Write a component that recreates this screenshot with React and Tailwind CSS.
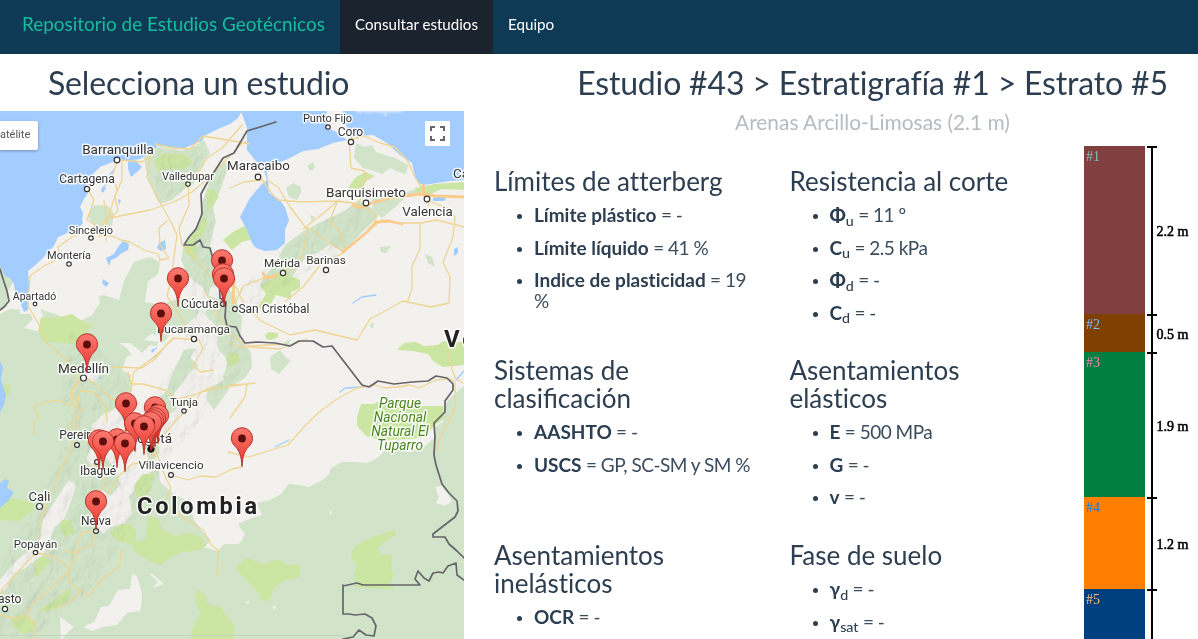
import React from "react";

const WATER = [
  "M0 111H242L238 118 230 124 218 129 204 136 202 141 197 143 182 149 170 147 157 146 147 155 140 159 133 160 117 160 110 163 100 167 92 175 88 178 86 186 88 193 84 199 80 207 83 213 82 220 83 223 77 230 67 233 61 236 58 237 54 246 50 250 43 258 32 268 28 271 29 285 29 298 28 310 24 312 20 302 15 292 14 284 10 278 5 276 0 266Z",
  "M241 111L247 128 247 150 255 160 263 167 267 180 261 185 250 198 240 217 247 230 252 243 256 248 265 251 277 250 285 243 285 230 289 220 285 207 279 199 269 193 268 180 266 167 273 165 290 158 303 151 318 149 333 143 347 140 338 133 330 129 325 121 327 111Z",
  "M343 111L344 122 349 130 351 138 357 136 373 135 387 143 400 155 412 163 415 177 419 183 423 185 437 183 450 181 464 180V111Z",
  "M128 161L135 160 142 167 137 172 131 177 128 169Z",
  "M433 198L440 195 446 199 444 201H433Z",
  "M454 249L458 247 458 253 454 256Z",
  "M0 361L3 368 1 380 6 395 4 405 0 412Z",
  "M0 483L5 479 9 481 7 488 14 492 9 500 0 508Z",
  "M103 186L106 188 103 193 101 191ZM123 241L129 244 128 250 122 253 116 258 111 260 109 266 106 258 114 254 118 247ZM159 243L165 240 166 249 161 251 157 248ZM103 279L109 283 106 287 102 283ZM118 199L121 200 119 205ZM151 350L158 347 152 353ZM99 376L102 378 99 380Z",
];

const FOREST = [
  "M147 147L160 147 182 151 195 146 204 140 210 153 205 160 198 172 194 183 182 191 172 200 160 204 156 198 150 183 146 170 144 158Z",
  "M230 160L220 166 211 174 208 187 202 203 200 218 194 230 184 244 181 260 188 276 202 287 207 295 221 300 226 278 211 263 210 240 216 222 213 207 222 186Z",
  "M88 215L94 205 108 206 114 214 112 225 104 233 96 230 91 221Z",
  "M134 262L150 257 160 262 158 274 148 281 145 302 160 305 174 300 190 300 200 312 190 322 183 330 170 334 161 347 150 345 142 353 127 356 122 370 133 376 141 388 124 394 120 402 132 418 112 426 104 440 106 458 117 470 120 485 111 496 100 489 91 500 91 521 104 534 110 527 123 525 132 513 129 497 138 487 147 474 159 468 160 482 174 494 188 501 194 520 203 533 211 540 202 550 214 562 215 577 206 572 200 557 186 553 170 566 156 568 147 571 158 582 149 592 142 606 145 611 141 613 142 593 137 576 132 574 130 589 118 590 109 606 101 607 94 622 87 625 80 631 60 617 61 639 H0V314L10 309 28 310 33 319 24 328 40 332 44 318 40 309 58 315 66 321 81 321 92 315 100 303 99 296 104 295 119 300 124 281Z",
  "M140 569L147 561 160 554 180 548 200 546 218 551 224 544 239 544 245 535 238 524 252 518 262 515 257 503 270 500 281 494 289 484 300 485 309 487 321 481 329 475 331 468 342 462 355 462 367 463 379 457 385 450 398 450 409 452 424 447 434 438 435 427 443 422 445 405 451 397 464 386V639H62L70 630 78 624 92 631 102 627 117 625 127 613 140 611 147 590 164 584 151 573 138 576Z",
  "M285 245L305 230 325 220 343 212 358 201 371 207 378 214 371 224 362 232 349 246 344 252 330 244 318 253 307 256 299 266 291 278 284 290 273 292 260 285 265 276 275 264Z",
  "M356 143L365 147 372 145 376 152 385 155 395 158 408 165 406 174 396 171 390 168 382 174 371 170 363 168 354 158ZM371 191L388 197 396 194 407 192 421 187 420 193 406 197 394 208 382 218 373 210ZM286 188L293 183 301 187 301 193 297 200 289 197ZM307 166L313 162 315 168 310 171ZM310 215L315 217 312 222ZM380 247L391 246 386 253 381 252ZM425 254L432 257 435 267 428 263ZM270 357L280 350 286 358 291 360 286 366 279 374 271 369ZM282 344L290 339 289 348ZM369 325L374 322 373 329Z",
  "M0 261L8 269 13 283 8 291 7 307 0 309Z",
  "M210 288L223 282 235 296 242 319 240 339 251 352 252 367 245 378 231 386 223 398 214 410 206 399 210 383 224 375 228 361 217 347 218 328 205 315Z",
  "M184 350L197 348 202 364 189 373 180 386 172 397 178 408 161 421 157 440 160 452 150 465 145 448 142 426 153 404 167 390 173 372Z",
];

const PARKS = [
  "M154 160L163 153 172 154 180 153 189 157 193 163 184 169 176 169 163 169 158 171Z",
  "M206 189L216 190 219 197 210 209 204 213 201 211 208 223 204 233 196 241 196 261 184 252 190 235 200 224 207 209Z",
  "M223 240L233 232 248 224 256 230 257 238 242 242 232 250Z",
  "M348 188L355 178 365 172 375 176 366 181 363 188 354 190Z",
  "M41 317L55 318 72 314 85 323 94 324 81 337 73 344 50 342 43 342 38 331Z",
  "M260 286L275 278 284 267 289 275 300 280 300 288 291 292 291 299 276 295 270 305 256 310 266 294Z",
  "M265 335L269 332 278 333 278 337 271 340 266 339Z",
  "M397 350L404 343 416 342 424 346 438 345 443 341 456 342 464 342V365L443 367 434 362 428 354 413 351Z",
  "M361 404L374 404 377 402 392 405 406 404 421 406 443 406 445 418 434 426 424 437 411 439 381 440 366 436 357 426 357 417Z",
  "M132 550L137 541 145 540 146 532 149 516 158 518 162 529 175 536 190 533 202 537 206 546 200 550 183 552 169 558 162 565 151 562 145 558Z",
  "M236 567L247 558 264 564 278 559 286 564 301 565 299 577 286 580 275 587 269 601 262 600 255 589 241 575Z",
  "M351 553L357 545 373 537 386 532 395 530 396 535 383 543 377 549 381 554 392 555 391 569 394 574 390 584 394 590 355 587 354 574 357 566 351 557Z",
  "M195 594L199 590 205 594 208 604 222 607 226 616 234 624 234 639H190L194 624 201 613 196 605Z",
  "M0 498L17 499 33 502 34 510 19 521 0 520Z",
  "M110 532L121 524 131 524 136 532 136 547 124 542 117 541Z",
  "M36 560L43 556 51 560 45 567 38 577 35 573ZM38 610L50 603 64 592 73 588 68 600 57 608 46 612ZM12 618L22 614 34 620 35 630 23 634 12 626ZM0 386L10 383 9 394 1 400Z",
  "M134 485L143 474 155 474 151 490 140 501 136 496Z",
  "M229 352L239 354 240 362 230 367 226 360ZM62 520L71 520 75 533 65 537 60 528ZM415 188L435 184 464 182V190L441 189 429 195 416 191Z",
];

const CLEARINGS = [
  "M119 343L130 343 145 355 157 349 158 342 144 340 151 334 160 335 164 343 174 341 174 349 167 364 153 367 143 362 132 356 127 348Z",
  "M130 378L137 367 150 369 164 369 154 379 144 386 139 397 131 389Z",
  "M80 370L91 360 100 371 96 382 84 380ZM92 425L104 414 118 407 126 427 111 440 100 456 93 468 86 458 93 444Z",
  "M62 490L69 480 76 485 72 499 63 521 55 526 43 555 27 567 15 573 6 589 0 592V580L17 560 31 550 41 537 43 520 53 504Z",
  "M20 290L27 280 36 286 34 295 39 309 39 330 34 325 36 314 20 314Z",
  "M199 345L212 342 215 362 224 380 210 388 197 395 188 413 179 429 176 447 162 457 158 444 170 425 177 406 190 389 201 369 190 357Z",
  "M435 487L442 486 447 493 452 501 445 506 436 503 439 497ZM329 512L332 511 331 515ZM246 602L250 600 248 604ZM272 607L276 606 275 610Z",
];

const ROADS = [
  "M117 161L113 174 117 190 112 205 106 226 106 241",
  "M122 162L122 180 115 196 118 211 110 218 130 214 150 210 174 202 192 192 207 179 218 168 234 152 242 143 246 142",
  "M120 160L142 162 150 156 147 177 157 197 170 220 177 235 174 257 171 280 167 296 178 313 194 340",
  "M87 188L94 200 89 214 87 220 96 225 88 232 72 237 58 247 60 258 44 266 30 276 28 306 40 326 46 342 62 356 76 372 91 381 112 399 128 406 138 403 128 419 121 444 114 459",
  "M104 201L106 218 98 236 112 236 121 240 130 242 144 250 158 254 160 260 169 258 160 245 159 228 167 221",
  "M155 144L173 148 190 149 203 136 221 139 240 142 249 144",
  "M242 125L222 148 207 158 200 170 188 182 189 205 179 228 182 245 196 258 207 274 223 278 236 287 243 302 261 321 290 335 315 330 357 340 370 319 383 312 403 301 431 307 449 303 450 277 443 262",
  "M230 188L244 182 263 180 265 184 273 195 278 200 302 202 337 201 353 203 366 208 377 215 373 227",
  "M267 180L278 187 290 207 303 224 307 230 303 255 291 269 264 278 243 286 235 304",
  "M307 227L326 240 343 252 367 232 382 220 397 223 421 223 437 220 464 227",
  "M303 229L325 212 338 200 330 220 340 232 345 252 320 265 304 286 286 301",
  "M349 139L350 152 351 168 364 171 369 178 360 183 364 190 359 203",
  "M351 139L364 136 380 143 395 147 407 160 416 179 425 193 429 206",
  "M420 223L420 249 412 266 412 288 408 301",
  "M443 262L453 237 455 217 447 208 429 201",
  "M228 452L249 457 268 451 288 445 304 427 318 413 337 399 357 388 375 385 384 388 397 387 410 385 419 388 436 380 450 379 455 382",
  "M83 378L72 390 73 405 81 408 76 430 71 450 58 475 47 504 40 523 39 541 37 553 51 556 62 562 70 570 56 583 33 603 28 614 17 619 0 615",
  "M67 436L75 412 80 391 94 392 106 407 107 422",
  "M93 464L108 482 99 492 96 511 97 531 82 532 74 553 66 551",
  "M96 531L91 546 79 550 73 563 67 576 72 585 80 590 90 596 98 583 111 573 120 566 121 550",
  "M80 590L75 598 60 608",
  "M34 434L34 421 39 418 34 406 47 402 59 400 71 406",
  "M155 452L148 462 132 464 121 474 110 490 98 508",
  "M151 449L162 437 177 419 193 405 201 392 218 388 231 386 255 383",
  "M155 449L165 476 171 488 165 502 164 505 188 520 203 530 211 545 218 550 217 575",
  "M171 475L188 480 200 476 216 477 232 469 242 467",
  "M112 367L142 368 155 359 167 344 173 338 199 340 203 349 193 366 201 372 213 370",
  "M128 372L131 384 143 384 165 390 178 399 194 395 214 386",
  "M173 339L154 357 134 372 130 395",
  "M73 373L78 380 70 393 80 404",
  "M204 290L210 300 216 312 222 321 231 334 240 341 250 346 285 344",
  "M230 342L237 347 250 347 280 349 307 339",
  "M455 382L455 408 448 423 440 437 437 450",
  "M448 333L448 356 455 378 463 383",
  "M45 542L37 552 24 565 12 579 2 589 0 600",
  "M26 616L35 623 35 639",
  "M230 385L247 384 245 397 230 418",
];

const BORDERS = [
  "M276 122L247 131 234 153 223 158 216 169 207 183 201 194 202 214 196 229 189 237 184 245 193 245 200 240 203 247 210 248 213 259 219 273 220 298 226 302 225 317 227 326 236 327 240 336 245 343 257 342 275 343 290 346 299 341 313 341 323 347 332 346 362 385 369 387 378 381 394 384 412 382 428 381 436 376 447 378 453 384 453 390 445 401 445 412 434 423 435 437 434 455 436 465 442 484 449 493 457 501 458 511 455 517 433 534 433 537 445 537 449 544 457 551 464 558",
  "M343 585L343 614 349 614 355 615 365 614 372 618 376 626 374 636 366 635 359 630 353 637 343 639",
  "M343 586L357 583 363 585H420L415 579 418 571 424 578 429 581 433 573 439 572 443 573 448 566 456 563 457 575 464 580",
  "M0 269L4 282 7 291 9 301 4 307 0 310",
];

const CITIES = [
  ["Barranquilla", 118, 153.5, 117, 160, 13.5, 2.8],
  ["Cartagena", 87, 183, 87, 189, 12, 2.6],
  ["Valledupar", 188, 180, 188, 184, 11, 2.2],
  ["Maracaibo", 258.5, 170, 258, 177, 13.3, 2.8],
  ["Punto Fijo", 327.5, 121.5, 328, 127, 11, 2.2],
  ["Coro", 350.5, 136, 351, 142, 12, 2.6],
  ["Barquisimeto", 366, 197, 366, 203, 13.5, 2.8],
  ["Valencia", 427.5, 216, 427, 199, 13.3, 2.8],
  ["Sincelejo", 91, 234, 91, 238, 11, 2.2],
  ["Montería", 69, 259, 69, 264, 11, 2.2],
  ["Mérida", 282, 267, 283, 273, 11.7, 2.6],
  ["Barinas", 326, 264, 326, 270, 11.8, 2.6],
  ["Apartadó", 34.5, 300, 35, 304, 10.5, 1.8],
  ["Cúcuta", 200, 308, 223, 304, 12, 2.4],
  ["San Cristóbal", 274, 313, 235, 309, 12, 2.4],
  ["Bucaramanga", 193.5, 333, 194, 339, 11.8, 2.6],
  ["Medellín", 83.5, 372.5, 83.5, 378, 13.5, 3],
  ["Tunja", 184, 406, 184, 411, 11.5, 2.2],
  ["Pereira", 78, 439, 77, 445, 12, 2.4],
  ["Ibagué", 98, 475, 97, 462, 12, 2.4],
  ["Villavicencio", 171, 469, 171, 475, 11.7, 2.4],
  ["Cali", 39.5, 500.5, 39.5, 506.5, 13, 3],
  ["Neiva", 96, 525, 96, 531, 12, 2.4],
  ["Popayán", 35.5, 548, 35.5, 552.5, 11.3, 2.2],
  ["Pasto", 6, 603, 5, 609, 12, 2.6],
];

const PINS = [
  [222, 260], [223, 274], [224, 278], [178, 278], [161, 313], [87, 344],
  [126, 403], [155, 407], [158, 415], [155, 418], [153, 420], [151, 422],
  [135, 423], [144, 426], [99, 440], [117, 439], [103, 441], [125, 443],
  [242, 438], [96, 501],
];

function Pin({ x, y }) {
  return (
    <g transform={`translate(${x} ${y})`}>
      <path
        d="M0 28C-.7 17-2.500 12.500-6.500 8.300C-9.300 5.500-10.600 3-10.600-.2A10.600 10.600 0 0 1 10.600-.2C10.600 3 9.300 5.500 6.500 8.300C2.500 12.500.7 17 0 28Z"
        fill="url(#pin)"
        stroke="#b8322d"
        strokeWidth="1"
      />
      <circle r="3.900" fill="#5c0f0c" />
    </g>
  );
}

function Halo({ children, ...rest }) {
  return (
    <text textAnchor="middle" stroke="#fff" strokeWidth="3" strokeOpacity=".85" strokeLinejoin="round" paintOrder="stroke" {...rest}>
      {children}
    </text>
  );
}

function StudyMap() {
  return (
    <div className="relative h-[528px] w-[464px] overflow-hidden">
      <svg className="block" width="464" height="528" viewBox="0 111 464 528" fontFamily="Roboto, sans-serif">
        <defs>
          <linearGradient id="pin" x1="0" y1="0" x2="0" y2="1">
            <stop offset="0" stopColor="#fb7a70" />
            <stop offset="1" stopColor="#ea3329" />
          </linearGradient>
          <filter id="relief" x="0" y="0" width="100%" height="100%">
            <feTurbulence type="fractalNoise" baseFrequency=".09 .06" numOctaves="4" seed="8" result="n" />
            <feDiffuseLighting in="n" surfaceScale="5" lightingColor="#fff" result="l">
              <feDistantLight azimuth="225" elevation="60" />
            </feDiffuseLighting>
            <feComposite in="l" in2="SourceAlpha" operator="in" />
          </filter>
        </defs>
        <rect y="111" width="464" height="528" fill="#f2f1ed" />
        <path d={FOREST.join("")} fill="#d1e4c9" />
        <path d={CLEARINGS.join("")} fill="#f2f1ed" />
        <path d={PARKS.join("")} fill="#cbe6a3" />
        <g filter="url(#relief)" opacity=".15" className="mix-blend-multiply">
          <path d="M70 330L100 350 120 370 140 410 180 360 190 320 185 255 204 200 230 160 213 207 213 260 225 300 245 340 250 360 200 420 160 470 130 530 90 590 30 639H0V560L40 500 65 440 62 390ZM147 150L200 147 204 160 180 195 160 200ZM285 245L358 201 378 214 344 252 299 276 240 320 230 300Z" />
        </g>
        <path d={WATER.join("")} fill="#a3ccff" />
        <g fill="none" strokeLinejoin="round" strokeLinecap="round">
          <path d="M353 303L362 297 376 295M340 392L345 388 363 387M275 447L289 440M161 352L150 360M456 380L464 371M105 186L108 177 114 170" stroke="#a3ccff" strokeWidth="1.300" />
          <path d={ROADS.join("")} stroke="#eed594" strokeWidth="1.300" />
          <path d="M353 205L360 208 372 203 390 198 420 194 436 196 464 197M343 252L367 232 376 222 389 221 402 224M423 185L425 197M234 279L233 303M263 273L265 278 276 276" stroke="#fbcb8b" strokeWidth="2.800" />
          <path d={BORDERS.join("")} stroke="#65656a" strokeWidth="1.700" />
        </g>
        <path d="M0 635.500H345" stroke="#c5d4bf" />

        <g fill="#333">
          {CITIES.map(([name, tx, ty, cx, cy, size, r]) => (
            <g key={name}>
              <circle cx={cx} cy={cy} r={r} fill="#fff" stroke="#333" strokeWidth="1.200" />
              <Halo x={tx} y={ty} fontSize={size}>{name}</Halo>
            </g>
          ))}
          <Halo x="150.500" y="443" fontSize="13.500">Bogotá</Halo>
          <circle cx="151" cy="449" r="3.200" fill="#111" stroke="#111" />
          <Halo x="453" y="178" fontSize="13.500" textAnchor="start">Caracas</Halo>
          <Halo x="355" y="112" fontSize="13" textAnchor="start" fill="#cfe3fd" strokeOpacity=".3">Curaçao</Halo>
        </g>
        <g fontStyle="italic" fontSize="13.800" fill="#4a8420">
          <Halo x="400" y="408">Parque</Halo>
          <Halo x="400" y="422">Nacional</Halo>
          <Halo x="400" y="436">Natural El</Halo>
          <Halo x="400" y="450">Tuparro</Halo>
        </g>
        <g fontWeight="700" fill="#222">
          <Halo x="197" y="513.500" fontSize="23.500" textLength="120">Colombia</Halo>
          <Halo x="444" y="347" fontSize="24" textAnchor="start" letterSpacing="3">Venezuela</Halo>
        </g>
        {PINS.map(([x, y]) => (
          <Pin key={`${x}-${y}`} x={x} y={y + 0.5} />
        ))}
      </svg>
      <button className="absolute top-[10px] left-0 h-[29px] w-[38px] rounded-r-[2px] bg-white text-left font-[Roboto,sans-serif] text-[11px] text-[#565656] shadow-[0_1px_3px_rgba(0,0,0,0.3)]">
        <span className="-ml-[6.500px] block whitespace-nowrap">Satélite</span>
      </button>
      <button className="absolute top-[10px] left-[425px] flex size-[25px] items-center justify-center rounded-[1px] bg-white">
        <svg width="15" height="15" viewBox="0 0 15 15" fill="none" stroke="#666" strokeWidth="2">
          <path d="M1 5V1H5M10 1H14V5M14 10V14H10M5 14H1V10" />
        </svg>
      </button>
    </div>
  );
}

function Group({ title, items, className }) {
  return (
    <section className={className}>
      <h3 className="text-[26px] leading-[28px]">{title}</h3>
      <ul className="mt-[9px] list-disc pl-[40px]">
        {items.map(([label, sub, value]) => (
          <li key={label + sub} className="mb-[11.6px] text-[19px] leading-[21px] marker:text-[15px]">
            <b className={label === "Φ" ? "font-black" : "font-bold"}>{label}</b>
            {sub && <sub className="bottom-[-0.25em] text-[14.25px] leading-none font-medium">{sub}</sub>}
            <span className="tracking-[-0.5px] text-[#3b4c5d]"> = {value}</span>
          </li>
        ))}
      </ul>
    </section>
  );
}

const LAYERS = [
  { id: "#1", y: 0, h: 168, fill: "#804040", ink: "#7fbfbf", label: "2.2 m", ly: 90 },
  { id: "#2", y: 168, h: 38, fill: "#804000", ink: "#7fbfff", label: "0.5 m", ly: 193 },
  { id: "#3", y: 206, h: 145, fill: "#008040", ink: "#ff7fbf", label: "1.9 m", ly: 285 },
  { id: "#4", y: 351, h: 92, fill: "#ff8000", ink: "#007fff", label: "1.2 m", ly: 403 },
  { id: "#5", y: 443, h: 92, fill: "#004080", ink: "#ffbf7f", label: "", ly: 0 },
];

function StrataColumn() {
  return (
    <svg className="block" width="114" height="493" viewBox="0 0 114 493" fontFamily="'Liberation Serif', serif" fontSize="14">
      {LAYERS.map((l) => (
        <g key={l.id}>
          <rect y={l.y} width="61" height={l.h} fill={l.fill} shapeRendering="crispEdges" />
          <text x="2" y={l.y + 15} fill={l.ink}>{l.id}</text>
          <rect x="63" y={l.y} width="10" height="2" />
          {l.label && <text x="72.500" y={l.ly} stroke="#000" strokeWidth=".55">{l.label}</text>}
        </g>
      ))}
      <rect x="67" width="2" height="493" />
    </svg>
  );
}

export default function App() {
  return (
    <div className="h-[639px] w-[1198px] overflow-hidden bg-white font-[Lato,sans-serif] text-[#2c3e50] [font-variant-ligatures:none]">
      <nav className="flex h-[54px] bg-[#0f3a55] text-[15px] text-white">
        <a className="w-[340px] pl-[22px] text-[18.9px] leading-[48px] whitespace-nowrap text-[#18bc9c]">Repositorio de Estudios Geotécnicos</a>
        <a className="w-[153px] bg-[#1b242e] text-center text-[15.1px] leading-[49px]">Consultar estudios</a>
        <a className="pl-[15px] text-[15.2px] leading-[49px]">Equipo</a>
      </nav>
      <div className="flex">
        <main className="w-[464px]">
          <h2 className="h-[57px] pl-[48px] text-[32px] leading-[58px] tracking-[-0.15px]">Selecciona un estudio</h2>
          <StudyMap />
        </main>
        <div className="flex w-[734px] flex-col">
          <header className="h-[92px] pl-[83px] text-center">
            <h2 className="h-[56px] text-[32px] leading-[58px] tracking-[-0.17px] whitespace-nowrap">Estudio #43 &gt; Estratigrafía #1 &gt; Estrato #5</h2>
            <p className="text-[20.9px] leading-[24px] text-[#b4bcc2]">Arenas Arcillo-Limosas (2.1 m)</p>
          </header>
          <div className="flex">
            <div className="grid w-[620px] grid-cols-[295.5px_295px] grid-rows-[189px_185px_150px] pt-[21px] pl-[30px]">
              <Group className="pr-[35px]" title="Límites de atterberg" items={[["Límite plástico", "", "-"], ["Límite líquido", "", "41 %"], ["Indice de plasticidad", "", "19 %"]]} />
              <Group title="Resistencia al corte" items={[["Φ", "u", "11 º"], ["C", "u", "2.5 kPa"], ["Φ", "d", "-"], ["C", "d", "-"]]} />
              <Group title={<span className="[font-variant-ligatures:normal]">Sistemas de<br />clasificación</span>} items={[["AASHTO", "", "-"], ["USCS", "", "GP, SC-SM y SM %"]]} />
              <Group title={<>Asentamientos<br />elásticos</>} items={[["E", "", "500 MPa"], ["G", "", "-"], ["v", "", "-"]]} />
              <Group title={<>Asentamientos<br />inelásticos</>} items={[["OCR", "", "-"]]} />
              <Group title="Fase de suelo" items={[["γ", "d", "-"], ["γ", "sat", "-"]]} />
            </div>
            <StrataColumn />
          </div>
        </div>
      </div>
    </div>
  );
}
